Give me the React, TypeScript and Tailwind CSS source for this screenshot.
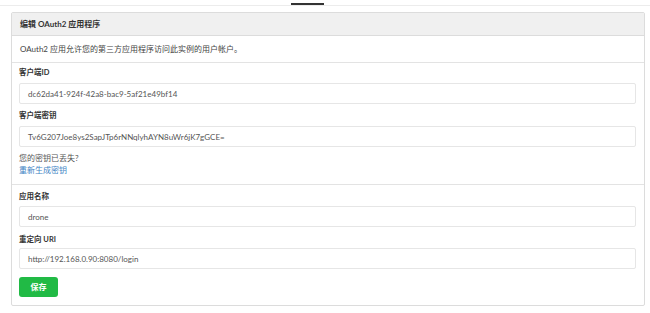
const font = "font-['Lato','Noto_Sans_CJK_SC',sans-serif]";

const Field: React.FC<{ label: string; value: string; gap?: string }> = ({ label, value, gap = "mb-[5px]" }) => (
  <div>
    <p className={`h-[10px] text-[7.5px] leading-[10px] font-bold text-[#333] ${gap}`}>{label}</p>
    <div className="flex h-[21px] items-center rounded-[2px] border border-[#e6e6e6] px-[8px] text-[8px] text-[#555]">
      {value}
    </div>
  </div>
);

const App: React.FC = () => {
  return (
    <div className={`h-[313px] w-[650px] overflow-hidden bg-white ${font}`}>
      <div className="h-[6px] border-b border-[#ececec] pt-[3px]">
        <div className="ml-[291px] h-[2px] w-[33px] bg-[#333]" />
      </div>
      <div className="mt-[6px] mr-[5px] ml-[11px] rounded-[2px] border border-[#dcdcdc]">
        <div className="flex h-[23px] items-center border-b border-[#dcdcdc] bg-[#f0f0f0] px-[8px] text-[8px] font-bold text-[#333]">
          编辑 OAuth2 应用程序
        </div>
        <div className="flex h-[27px] items-center border-b border-[#e3e3e3] px-[8px] text-[8px] text-[#444]">
          OAuth2 应用允许您的第三方应用程序访问此实例的用户帐户。
        </div>
        <div className="flex flex-col border-b border-[#e3e3e3] pt-[5px] pr-[8px] pb-[9px] pl-[7px]">
          <Field label="客户端ID" value="dc62da41-924f-42a8-bac9-5af21e49bf14" />
          <div className="mt-[7px]">
            <Field label="客户端密钥" value="Tv6G207Joe8ys2SapJTp6rNNqlyhAYN8uWr6jK7gGCE=" />
          </div>
          <p className="mt-[6px] h-[10px] text-[8px] leading-[10px] text-[#555]">您的密钥已丢失?</p>
          <p className="mt-[2px] h-[10px] text-[8px] leading-[10px] text-[#4183c4]">重新生成密钥</p>
        </div>
        <div className="flex flex-col pt-[7px] pr-[8px] pb-[8px] pl-[7px]">
          <Field label="应用名称" value="drone" gap="mb-[4px]" />
          <div className="mt-[8px]">
            <Field label="重定向 URI" value="http://192.168.0.90:8080/login" gap="mb-[3px]" />
          </div>
          <button className="mt-[8px] h-[20px] w-[39px] rounded-[3px] bg-[#21ba45] text-[8px] font-bold text-white">
            保存
          </button>
        </div>
      </div>
    </div>
  );
};

export default App;
